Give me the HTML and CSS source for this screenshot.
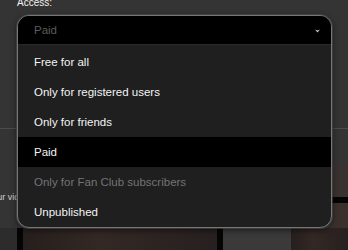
FILE: index.html
```html
<!DOCTYPE html>
<html lang="en">
<head>
    <meta charset="UTF-8">
    <meta name="viewport" content="width=device-width, initial-scale=1.0">
    <title>Access</title>
    <link rel="stylesheet" href="styles.css">
</head>
<body>
    <div class="page">
        <div class="label">Access:</div>
        <div class="info"></div>
        <div class="desc">
            <p class="desc-text">Your videos</p>
            <div class="side-thumb"></div>
        </div>
        <div class="thumbs">
            <div class="thumb grey"></div>
            <div class="gap"></div>
            <div class="thumb photo wide"></div>
            <div class="gap"></div>
            <div class="thumb light"></div>
            <div class="thumb photo"></div>
        </div>

        <div class="dropdown">
            <div class="selected">
                <span>Paid</span>
                <svg class="arrow" width="5" height="4" viewBox="0 0 5 4">
                    <polygon points="0,0.5 2.5,1.5 5,0.5 2.5,3.5" fill="#cfcfcf"/>
                </svg>
            </div>
            <ul class="options">
                <li>Free for all</li>
                <li>Only for registered users</li>
                <li>Only for friends</li>
                <li class="active">Paid</li>
                <li class="disabled">Only for Fan Club subscribers</li>
                <li>Unpublished</li>
            </ul>
        </div>
    </div>
</body>
</html>
```

FILE: styles.css
```css
body {
    margin: 0;
    padding: 0;
    background: #343434;
    font-family: "Liberation Sans", Arial, sans-serif;
}
.page {
    position: relative;
    width: 348px;
    height: 250px;
    overflow: hidden;
    background: #343434;
}
.label {
    margin-top: -3px;
    padding-left: 17px;
    font-size: 10px;
    line-height: 12px;
    color: #f2f2f2;
}
.info {
    height: 119px;
    border-bottom: 1px solid #4c4c4c;
}
.desc {
    display: flex;
    justify-content: space-between;
    height: 99px;
}
.desc-text {
    margin: 63px 0 0 -13px;
    font-size: 9px;
    color: #cfcfcf;
}
.side-thumb {
    width: 16px;
    height: 63px;
    margin-top: 36px;
    background: linear-gradient(#3a3230 0, #3a3230 32px, #050505 32px, #050505 38px, #3b302c 38px);
}
.thumbs {
    display: flex;
    height: 22px;
}
.thumb {
    width: 17px;
    background: #2c2c2c;
}
.gap {
    width: 6px;
    background: #050505;
}
.photo {
    flex: 1;
    background: linear-gradient(90deg, #261f1d, #332824 40%, #272020);
}
.wide {
    flex: 0 0 194px;
}
.light {
    width: 68px;
    background: #3a3a3a;
}

.dropdown {
    position: absolute;
    left: 17px;
    top: 15px;
    width: 313px;
    height: 211px;
    border: 1px solid #767676;
    border-radius: 12px;
    background: #1f1f1f;
    overflow: hidden;
    box-shadow: 0 0 0 1px rgba(80, 80, 80, 0.6), 0 2px 6px rgba(0, 0, 0, 0.6);
}
.selected {
    display: flex;
    justify-content: space-between;
    align-items: center;
    height: 28px;
    padding: 0 11px 0 16px;
    background: #000;
    border-bottom: 1px solid #2a2a2a;
    font-size: 11.5px;
    color: #5c5c5c;
}
.arrow {
    margin-top: 1px;
}
.options {
    list-style: none;
    margin: 0;
    padding: 2px 0 0 0;
}
.options li {
    height: 30px;
    line-height: 30px;
    padding-left: 16px;
    font-size: 11.5px;
    color: #f4f4f4;
}
.options li.active {
    background: #000;
}
.options li.disabled {
    color: #747474;
}
```
